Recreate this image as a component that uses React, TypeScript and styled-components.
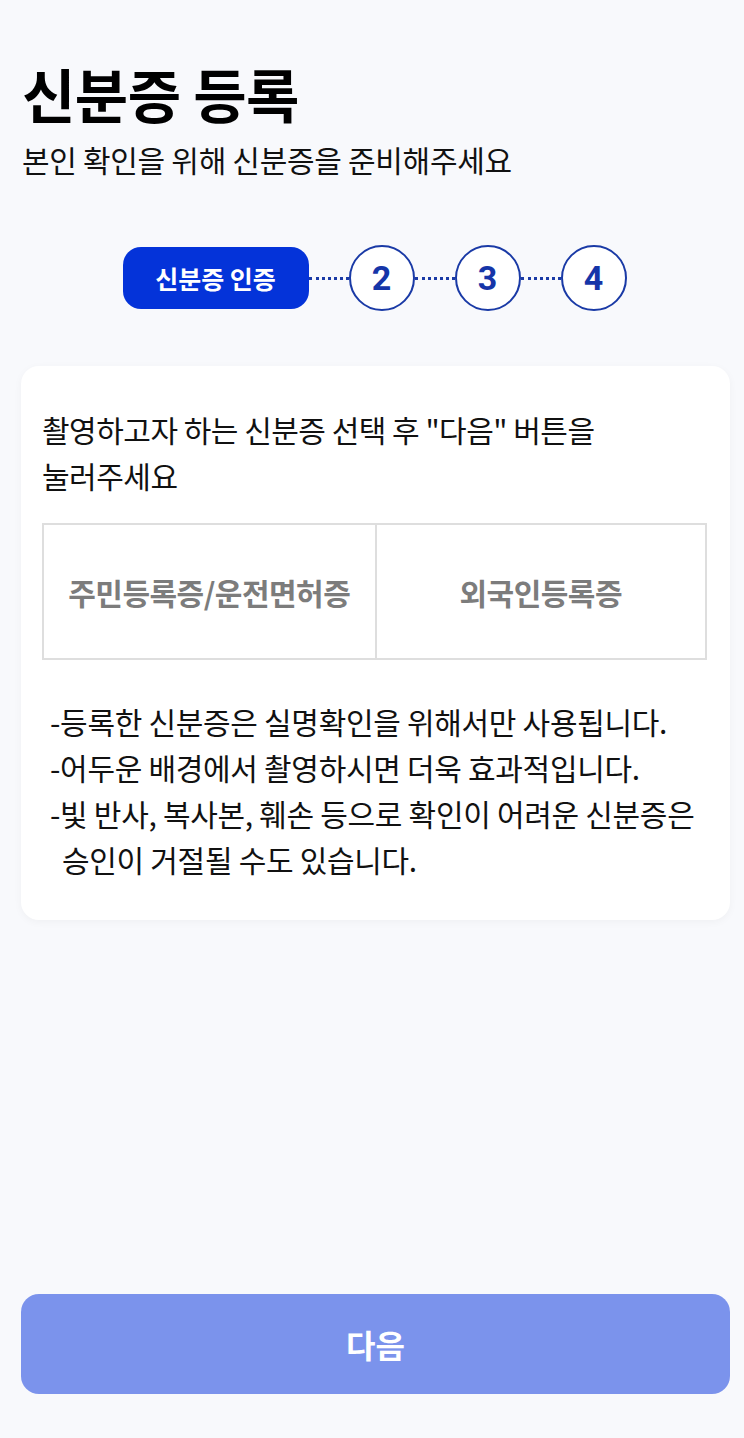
import styled, { createGlobalStyle } from "styled-components";

const GlobalStyle = createGlobalStyle`
  html, body {
    margin: 0;
    padding: 0;
    background: #f8f9fc;
  }
  body {
    font-family: "Noto Sans CJK KR", "Noto Sans", sans-serif;
    color: #111;
  }
`;

const steps = ["2", "3", "4"];
const idTypes = ["주민등록증/운전면허증", "외국인등록증"];
const notes = [
  "-등록한 신분증은 실명확인을 위해서만 사용됩니다.",
  "-어두운 배경에서 촬영하시면 더욱 효과적입니다.",
  "-빛 반사, 복사본, 훼손 등으로 확인이 어려운 신분증은 승인이 거절될 수도 있습니다.",
];

const App = () => {
  return (
    <Page>
      <GlobalStyle />
      <Header>
        <Title>신분증 등록</Title>
        <Subtitle>본인 확인을 위해 신분증을 준비해주세요</Subtitle>
      </Header>
      <Stepper>
        <ActiveStep>신분증 인증</ActiveStep>
        {steps.map((s) => (
          <StepGroup key={s}>
            <Dots />
            <StepCircle>{s}</StepCircle>
          </StepGroup>
        ))}
      </Stepper>
      <Card>
        <Guide>
          촬영하고자 하는 신분증 선택 후 "다음" 버튼을
          <br />
          눌러주세요
        </Guide>
        <Choices>
          {idTypes.map((t) => (
            <Choice key={t}>{t}</Choice>
          ))}
        </Choices>
        <Notes>
          {notes.map((n) => (
            <Note key={n}>{n}</Note>
          ))}
        </Notes>
      </Card>
      <Spacer />
      <NextButton>다음</NextButton>
    </Page>
  );
};
export default App;

const Page = styled.div`
  width: 744px;
  height: 1438px;
  box-sizing: border-box;
  padding: 55px 14px 44px 21px;
  display: flex;
  flex-direction: column;
`;

const Header = styled.div`
  display: flex;
  flex-direction: column;
  padding-left: 1px;
`;

const Title = styled.h1`
  margin: 0;
  font-size: 58px;
  font-weight: 700;
  line-height: 76px;
  letter-spacing: -0.5px;
  color: #000;
`;

const Subtitle = styled.p`
  margin: 8px 0 0;
  font-size: 30px;
  font-weight: 400;
  line-height: 40px;
  letter-spacing: -0.3px;
  color: #111;
`;

const Stepper = styled.div`
  display: flex;
  align-items: center;
  justify-content: center;
  margin-top: 66px;
  padding-right: 2px;
`;

const ActiveStep = styled.div`
  width: 186px;
  height: 62px;
  border-radius: 18px;
  background: #0433d9;
  color: #fff;
  font-size: 25px;
  font-weight: 700;
  display: flex;
  align-items: center;
  justify-content: center;
`;

const StepGroup = styled.div`
  display: flex;
  align-items: center;
`;

const Dots = styled.div`
  width: 40px;
  height: 0;
  border-top: 3px dotted #1a3aa6;
`;

const StepCircle = styled.div`
  box-sizing: border-box;
  width: 66px;
  height: 66px;
  border-radius: 50%;
  border: 2px solid #1a3aa6;
  background: #fff;
  color: #1535a8;
  font-family: "Roboto", "Noto Sans", sans-serif;
  font-size: 34px;
  font-weight: 700;
  display: flex;
  align-items: center;
  justify-content: center;
`;

const Card = styled.div`
  margin-top: 55px;
  background: #fff;
  border-radius: 18px;
  box-shadow: 0 2px 8px rgba(0, 0, 0, 0.04);
  padding: 40px 23px 38px 21px;
  display: flex;
  flex-direction: column;
`;

const Guide = styled.p`
  margin: 0;
  font-size: 30px;
  line-height: 46px;
  letter-spacing: -0.5px;
  color: #111;
`;

const Choices = styled.div`
  margin-top: 25px;
  display: grid;
  grid-template-columns: 1fr 1fr;
  border: 2px solid #dedede;
  height: 133px;
`;

const Choice = styled.div`
  display: flex;
  align-items: center;
  justify-content: center;
  font-size: 30px;
  font-weight: 700;
  letter-spacing: -0.5px;
  color: #7c7c7c;
  & + & {
    border-left: 2px solid #dedede;
  }
`;

const Notes = styled.ul`
  list-style: none;
  margin: 38px 0 0;
  padding: 0 0 0 8px;
`;

const Note = styled.li`
  font-size: 30px;
  line-height: 46px;
  letter-spacing: -0.3px;
  color: #111;
  padding-left: 12px;
  text-indent: -12px;
`;

const Spacer = styled.div`
  flex: 1;
`;

const NextButton = styled.button`
  height: 100px;
  width: 100%;
  border: none;
  border-radius: 18px;
  background: #7b93ec;
  color: #fff;
  font-family: "Noto Sans CJK KR", sans-serif;
  font-size: 32px;
  font-weight: 700;
`;
